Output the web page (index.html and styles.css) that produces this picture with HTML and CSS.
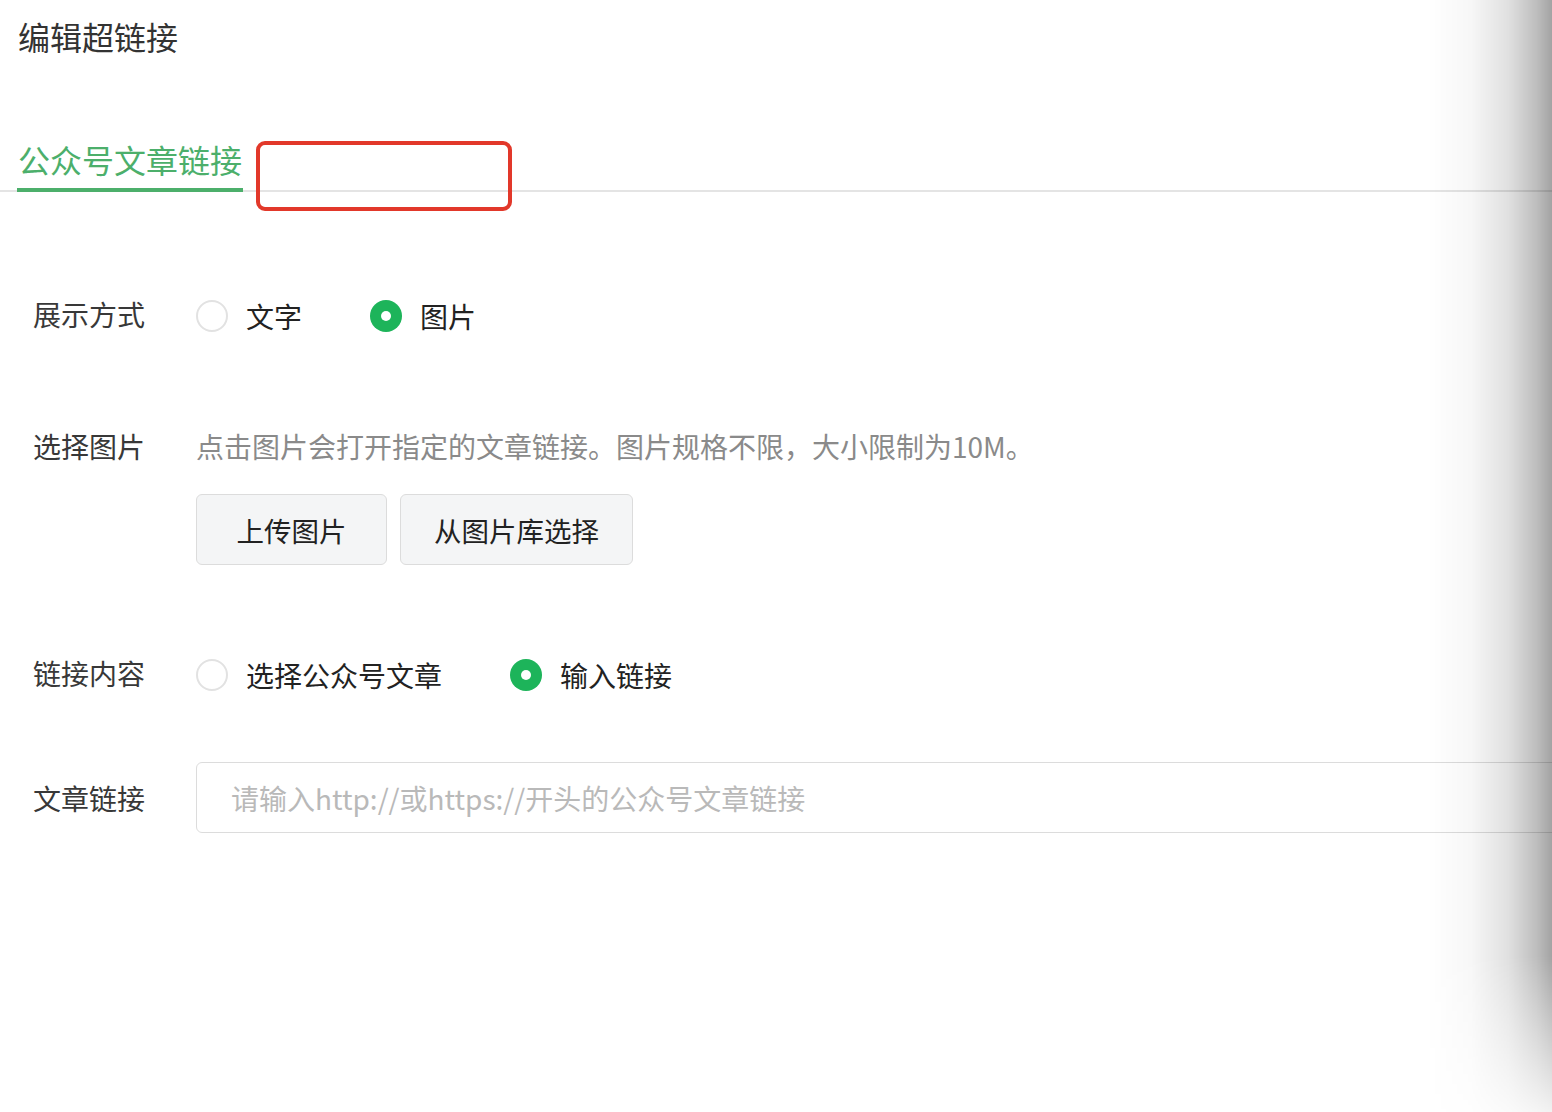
FILE: index.html
```html
<!DOCTYPE html>
<html lang="zh-CN">
<head>
    <meta charset="UTF-8">
    <meta name="viewport" content="width=device-width, initial-scale=1.0">
    <title>编辑超链接</title>
    <link rel="stylesheet" href="styles.css">
</head>
<body>

    <h1 class="page-title">编辑超链接</h1>

    <!-- 标签栏 -->
    <div class="tabs">
        <div class="tab active">公众号文章链接</div>
        <div class="mark-box"></div>
    </div>

    <div class="form">
        <div class="form-row">
            <label class="form-label">展示方式</label>
            <div class="form-field radios">
                <span class="radio-item"><i class="radio"></i>文字</span>
                <span class="radio-item"><i class="radio checked"></i>图片</span>
            </div>
        </div>

        <div class="form-row row-image">
            <label class="form-label">选择图片</label>
            <div class="form-field">
                <p class="hint">点击图片会打开指定的文章链接。图片规格不限，大小限制为10M。</p>
                <div class="btn-group">
                    <button class="btn">上传图片</button>
                    <button class="btn">从图片库选择</button>
                </div>
            </div>
        </div>

        <div class="form-row row-content">
            <label class="form-label">链接内容</label>
            <div class="form-field radios">
                <span class="radio-item"><i class="radio"></i>选择公众号文章</span>
                <span class="radio-item"><i class="radio checked"></i>输入链接</span>
            </div>
        </div>

        <div class="form-row row-link">
            <label class="form-label">文章链接</label>
            <div class="form-field">
                <input class="text-input" type="text" placeholder="请输入http://或https://开头的公众号文章链接">
            </div>
        </div>
    </div>

    <!-- 右侧阴影 -->
    <div class="edge-shadow"></div>

</body>
</html>
```

FILE: styles.css
```css
  html,
  body {
      height: 100%;
  }
  body {
      font-family: 'Noto Sans CJK SC', 'Noto Sans', sans-serif;
      background-color: #fff;
      color: #333;
      margin: 0;
      padding: 0;
      overflow: hidden;
      position: relative;
  }
  button,
  input {
      font-family: inherit;
      -webkit-tap-highlight-color: transparent;
  }
  button:focus,
  input:focus {
      outline: none;
  }

  .page-title {
      margin: 16px 0 0 18px;
      font-size: 32px;
      line-height: 40px;
      font-weight: normal;
      color: #333;
  }

  /* 标签栏 */
  .tabs {
      position: relative;
      display: flex;
      margin-top: 83px;
      border-bottom: 2px solid #e4e4e4;
  }
  .tab {
      margin-left: 17px;
      margin-bottom: -2px;
      padding: 0 1px 9px 1px;
      font-size: 32px;
      line-height: 40px;
      color: #4caf6b;
      border-bottom: 4px solid #4caf6b;
  }
  /* 红色标注框 */
  .mark-box {
      position: absolute;
      left: 256px;
      top: 2px;
      width: 248px;
      height: 62px;
      border: 4px solid #e2382a;
      border-radius: 9px;
  }

  /* 表单 */
  .form {
      padding: 104px 0 0 33px;
  }
  .form-row {
      display: flex;
      align-items: flex-start;
  }
  .form-label {
      width: 163px;
      flex-shrink: 0;
      font-size: 28px;
      line-height: 36px;
      color: #383838;
  }
  .form-field {
      flex: 1;
  }
  .row-image {
      margin-top: 92px;
  }
  .row-content {
      margin-top: 90px;
  }
  .row-link {
      margin-top: 67px;
      align-items: center;
  }

  /* 单选 */
  .radios {
      display: flex;
      align-items: center;
      height: 40px;
  }
  .radio-item {
      display: flex;
      align-items: center;
      margin-right: 68px;
      font-size: 28px;
      color: #222;
  }
  .radio {
      width: 32px;
      height: 32px;
      margin-right: 18px;
      box-sizing: border-box;
      border: 2px solid #e2e2e2;
      border-radius: 50%;
      position: relative;
  }
  .radio.checked {
      border: none;
      background-color: #1db45a;
  }
  .radio.checked::after {
      content: "";
      position: absolute;
      left: 11px;
      top: 11px;
      width: 10px;
      height: 10px;
      border-radius: 50%;
      background-color: #fff;
  }

  .hint {
      margin: 0;
      font-size: 28px;
      line-height: 36px;
      color: #8a8a8a;
  }
  .btn-group {
      display: flex;
      gap: 13px;
      margin-top: 30px;
  }
  .btn {
      min-width: 191px;
      height: 71px;
      padding: 0 33px;
      font-size: 27.5px;
      color: #222;
      background-color: #f4f5f6;
      border: 1px solid #dcdcdc;
      border-radius: 6px;
      cursor: pointer;
  }

  .text-input {
      box-sizing: border-box;
      width: 1420px;
      height: 71px;
      padding: 0 34px;
      font-size: 28px;
      color: #333;
      border: 1px solid #dcdcdc;
      border-radius: 6px;
  }
  .text-input::placeholder {
      color: #b9b9b9;
  }

  /* 右侧阴影 */
  .edge-shadow {
      position: absolute;
      top: 0;
      right: 0;
      width: 125px;
      height: 100%;
      pointer-events: none;
      background: linear-gradient(to right,
          rgba(0, 0, 0, 0) 0%,
          rgba(0, 0, 0, 0.03) 35%,
          rgba(0, 0, 0, 0.12) 65%,
          rgba(0, 0, 0, 0.26) 88%,
          rgba(0, 0, 0, 0.36) 100%);
      -webkit-mask-image: linear-gradient(to bottom, #000 86%, rgba(0, 0, 0, 0.15) 100%);
      mask-image: linear-gradient(to bottom, #000 86%, rgba(0, 0, 0, 0.15) 100%);
  }
```
